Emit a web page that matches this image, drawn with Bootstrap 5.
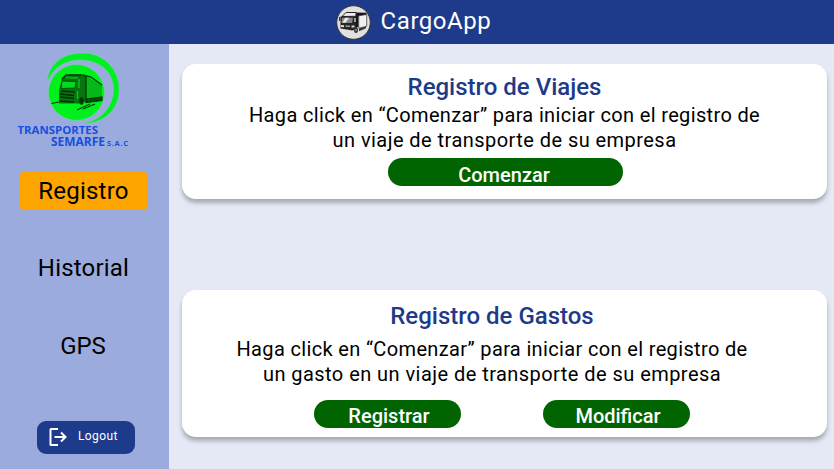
<!DOCTYPE html>
<html lang="es">
<head>
<meta charset="utf-8">
<meta name="viewport" content="width=device-width, initial-scale=1">
<title>CargoApp</title>
<link rel="stylesheet" href="https://cdn.jsdelivr.net/npm/bootstrap@5.3.0/dist/css/bootstrap.min.css">
<style>
  body { font-family: Roboto, "Liberation Sans", sans-serif; background: #e5e9f5; color: #000; }
  .topbar { height: 44px; background: #1e3a8a; color: #fff; padding-right: 7px; }
  .brand-name { font-size: 24px; line-height: 28px; letter-spacing: .55px; margin: -3px 0 0 10px; }
  .sidebar { width: 169px; background: #9babde; }
  .company-logo { width: 120px; height: 100px; margin: 6px 0 0 14px; }
  .side-link { width: 129px; height: 38px; font-size: 24px; line-height: 38px; padding: 0; color: #000; border-radius: 5px; letter-spacing: .2px; }
  .side-nav { gap: 39px; margin: 22px 0 0 19px; }
  .side-link.active { background: #ffa500; color: #000; }
  .side-link:last-child { line-height: 40px; letter-spacing: 0; padding-right: 1px; }
  .logout-btn { width: 98px; height: 33px; margin: 0 0 15px 37px; padding: 0 0 0 10px; background: #1e3a8a; color: #fff; border-radius: 9px; font-size: 12px; }
  .logout-text { line-height: 14px; margin: -4px 0 0 11px; letter-spacing: .4px; }
  .content { padding: 20px 7px 32px 13px; }
  .panel { border: 0; border-radius: 14px; box-shadow: 0 4px 4px rgba(0,0,0,.27); }
  .panel-trips { height: 135px; padding-top: 9px; }
  .panel-costs { height: 147px; padding-top: 12px; }
  .shifted { margin-right: 25px; }
  .panel-title { font-size: 24px; line-height: 28px; font-weight: 500; color: #1e3a8a; }
  .panel-text { font-size: 20px; line-height: 25px; }
  .panel-text span { display: block; white-space: nowrap; letter-spacing: .35px; }
  .panel-text span + span { letter-spacing: .45px; }
  .panel-trips .panel-text { padding-top: 2px; }
  .panel-costs .panel-title { margin-bottom: 7px; }
  .action { height: 28px; padding: 3px 0 0; border: 0; border-radius: 14px; background: #006400; color: #fff; font-size: 20px; line-height: 26px; font-weight: 500; }
  .action:hover { background: #006400; color: #fff; }
  .action-wide { width: 235px; margin: 5px 0 0 1px; padding: 4px 2px 0 0; }
  .action-half { width: 147px; padding-left: 3px; }
  .action-row { gap: 82px; margin: 13px 5px 0 0; }
</style>
<script defer src="https://cdn.jsdelivr.net/npm/bootstrap@5.3.0/dist/js/bootstrap.bundle.min.js"></script>
</head>
<body class="vh-100 d-flex flex-column overflow-hidden">
<header class="topbar d-flex flex-shrink-0 align-items-center justify-content-center">
  <svg width="35" height="35" viewBox="0 0 35 35">
    <circle cx="17.500" cy="17.500" r="16.800" fill="#e0e0e0" stroke="#333" stroke-width="1"/>
    <path d="M19 7.500l11.500.2v2.300l-8 1.500v10.500h-3z" fill="#151515"/>
    <path d="M22.700 10.800l8-1.300v11.700l-8 2z" fill="#f0f0f0" stroke="#333" stroke-width=".7"/>
    <path d="M6 11.500l4-4h10v3.800z" fill="#eee" stroke="#222" stroke-width="1"/>
    <path d="M4.500 11.500h16v12.500l-4 1.500-12-2z" fill="#252525"/>
    <path d="M6 12.800h11l-.8 5.200H5.500z" fill="#888"/>
    <path d="M9 12.800h4.500l-4 5H6.500z" fill="#e8e8e8"/>
    <path d="M5 20l3 .3v1.900l-3-.3zM9.500 20.500l4.500.3v1l-4.500-.3zM15.500 20.500h3v2h-3zM18.300 13h1.300v4h-1.300z" fill="#ddd"/>
    <path d="M3.700 12v4" stroke="#111" stroke-width="1"/>
    <ellipse cx="20" cy="25" rx="2" ry="3" fill="#333"/>
    <ellipse cx="20" cy="25" rx=".7" ry="1.300" fill="#aaa"/>
    <path d="M23 23.500l7-2v1.700l-7 3z" fill="#333"/>
  </svg>
  <span class="brand-name">CargoApp</span>
</header>
<div class="d-flex flex-grow-1">
  <aside class="sidebar d-flex flex-column flex-shrink-0">
    <svg class="company-logo" viewBox="14 50 120 100">
      <path d="M47 83C48 64 63 53 82 53A35.500 35.500 0 0 1 119 90C119 112 101 125 79 123.500C98 123 113.500 109 113.500 89C113.500 72 100 60 80 60C64 60 52 69 47 83z" fill="#00ee22" stroke="#74d89e" stroke-width=".5"/>
      <circle cx="76.500" cy="92.500" r="28" fill="#00f01e" stroke="#74cf9e" stroke-width=".8"/>
      <path d="M62 78l4-3.500h16l4 1v26l-5 2H59V91z" fill="#06740f"/>
      <path d="M86 76l16 9v13l-16 3z" fill="#05b719"/>
      <path d="M83 75l8 2 11 8M62 79l4-4h16M86 76v25" stroke="#013b05" stroke-width="1.300" fill="none"/>
      <path d="M62 81l14 .5-1 6.500-14 .5z" fill="#00dc1d" stroke="#034208" stroke-width=".8"/>
      <path d="M67 76.500l11 .5v2l-13-.5z" fill="#03b315"/>
      <path d="M61 91l14 1M60 94l14 1.500M60 97l14 1.500M60 101l14 1" stroke="#012e04" stroke-width="1.400"/>
      <path d="M79 79v9M77.500 91v8" stroke="#00c51b" stroke-width="1.500"/>
      <path d="M51.500 103.500l7.500-1.500M86 99l16-2v3.500l-16 2zM77 110l13-6M83 109l12-5" stroke="#013b05" stroke-width="1.200" fill="#034b08"/>
      <ellipse cx="81.500" cy="101" rx="2.300" ry="3.700" fill="#023605"/>
      <g fill="#174fe0" font-family="'Open Sans', 'Noto Sans', sans-serif" font-weight="700">
        <text x="17.500" y="134.300" font-size="11" textLength="80.500" lengthAdjust="spacingAndGlyphs">TRANSPORTES</text>
        <text x="51" y="146" font-size="11.500" textLength="54" lengthAdjust="spacingAndGlyphs">SEMARFE</text>
        <text x="107" y="146" font-size="7.500" textLength="21" lengthAdjust="spacing">S.A.C</text>
      </g>
    </svg>
    <nav class="side-nav nav flex-column align-items-start">
      <a class="side-link nav-link active text-center" href="#">Registro</a>
      <a class="side-link nav-link text-center" href="#">Historial</a>
      <a class="side-link nav-link text-center" href="#">GPS</a>
    </nav>
    <button class="logout-btn btn d-flex align-items-center mt-auto" type="button">
      <svg width="19" height="19" viewBox="0 0 19 19" fill="none" stroke="#fff" stroke-width="2">
        <path d="M10 1H3Q2.500 1 2.500 1.500v15q0 .5.500.5h7M6.500 9h11M13 4.500l4.500 4.500-4.500 4.500"/>
      </svg>
      <span class="logout-text">Logout</span>
    </button>
  </aside>
  <main class="content flex-grow-1 d-flex flex-column justify-content-between">
    <section class="panel panel-trips card align-items-center text-center">
      <h2 class="panel-title mb-0">Registro de Viajes</h2>
      <p class="panel-text mb-0"><span>Haga click en “Comenzar” para iniciar con el registro de</span><span>un viaje de transporte de su empresa</span></p>
      <button class="action action-wide btn" type="button">Comenzar</button>
    </section>
    <section class="panel panel-costs card align-items-center text-center">
      <h2 class="panel-title shifted">Registro de Gastos</h2>
      <p class="panel-text shifted mb-0"><span>Haga click en “Comenzar” para iniciar con el registro de</span><span>un gasto en un viaje de transporte de su empresa</span></p>
      <div class="action-row d-flex">
        <button class="action action-half btn" type="button">Registrar</button>
        <button class="action action-half btn" type="button">Modificar</button>
      </div>
    </section>
  </main>
</div>
</body>
</html>
